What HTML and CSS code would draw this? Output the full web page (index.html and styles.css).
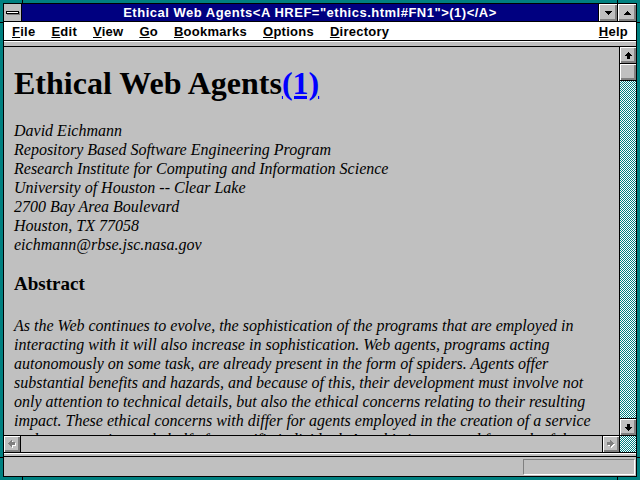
FILE: index.html
```html
<!DOCTYPE html>
<html lang="en">
<head>
    <meta charset="UTF-8">
    <title>Ethical Web Agents</title>
    <link rel="stylesheet" href="styles.css">
</head>
<body>

<div class="frame">
    <span class="tick tick-t1"></span>
    <span class="tick tick-t2"></span>
    <span class="tick tick-b1"></span>
    <span class="tick tick-b2"></span>
    <span class="tick tick-l1"></span>
    <span class="tick tick-l2"></span>
    <span class="tick tick-r1"></span>
    <span class="tick tick-r2"></span>

    <div class="window">
        <div class="titlebar">
            <div class="sysbox"><span class="sysbar"></span></div>
            <div class="title">Ethical Web Agents&lt;A HREF="ethics.html#FN1"&gt;(1)&lt;/A&gt;</div>
            <div class="tbtn">
                <svg width="9" height="6" viewBox="0 0 9 6" shape-rendering="crispEdges"><polygon points="1,1 8,1 4.5,5" fill="#000"/></svg>
            </div>
            <div class="tbtn">
                <svg width="9" height="6" viewBox="0 0 9 6" shape-rendering="crispEdges"><polygon points="1,5 8,5 4.5,1" fill="#000"/></svg>
            </div>
        </div>

        <div class="menubar">
            <span class="menu"><u>F</u>ile</span>
            <span class="menu"><u>E</u>dit</span>
            <span class="menu"><u>V</u>iew</span>
            <span class="menu"><u>G</u>o</span>
            <span class="menu"><u>B</u>ookmarks</span>
            <span class="menu"><u>O</u>ptions</span>
            <span class="menu"><u>D</u>irectory</span>
            <span class="menu help"><u>H</u>elp</span>
        </div>

        <div class="toolstrip"></div>

        <div class="view">
            <div class="page">
                <h1>Ethical Web Agents<a href="#FN1">(1)</a></h1>

                <div class="address">
                    David Eichmann<br>
                    Repository Based Software Engineering Program<br>
                    Research Institute for Computing and Information Science<br>
                    University of Houston -- Clear Lake<br>
                    2700 Bay Area Boulevard<br>
                    Houston, TX 77058<br>
                    eichmann@rbse.jsc.nasa.gov
                </div>

                <h3>Abstract</h3>

                <p class="abstract">
                    As the Web continues to evolve, the sophistication of the programs that are employed in<br>
                    interacting with it will also increase in sophistication. Web agents, programs acting<br>
                    autonomously on some task, are already present in the form of spiders. Agents offer<br>
                    substantial benefits and hazards, and because of this, their development must involve not<br>
                    only attention to technical details, but also the ethical concerns relating to their resulting<br>
                    impact. These ethical concerns with differ for agents employed in the creation of a service<br>
                    and agents acting on behalf of a specific individual. An ethic is proposed for each of these
                </p>
            </div>

            <div class="vbar">
                <div class="sbtn up">
                    <svg width="9" height="9" viewBox="0 0 9 9" shape-rendering="crispEdges"><polygon points="4.5,1 8,5 6,5 6,8 3,8 3,5 1,5" fill="#000"/></svg>
                </div>
                <div class="thumb"></div>
                <div class="track"></div>
                <div class="sbtn down">
                    <svg width="9" height="9" viewBox="0 0 9 9" shape-rendering="crispEdges"><polygon points="4.5,8 8,4 6,4 6,1 3,1 3,4 1,4" fill="#000"/></svg>
                </div>
            </div>

            <div class="hbar">
                <div class="sbtn left">
                    <svg width="10" height="10" viewBox="0 0 10 10" shape-rendering="crispEdges">
                        <polygon points="2,5.5 6,2 6,4 9,4 9,7 6,7 6,9" fill="#fff"/>
                        <polygon points="1,4.5 5,1 5,3 8,3 8,6 5,6 5,8" fill="#808080"/>
                    </svg>
                </div>
                <div class="htrack"></div>
                <div class="sbtn right">
                    <svg width="10" height="10" viewBox="0 0 10 10" shape-rendering="crispEdges">
                        <polygon points="9,5.5 5,2 5,4 2,4 2,7 5,7 5,9" fill="#fff"/>
                        <polygon points="8,4.5 4,1 4,3 1,3 1,6 4,6 4,8" fill="#808080"/>
                    </svg>
                </div>
            </div>

            <div class="corner"></div>
        </div>

        <div class="strip"></div>

        <div class="statusbar">
            <div class="statusbox"></div>
        </div>
    </div>
</div>

</body>
</html>
```

FILE: styles.css
```css
body {
    margin: 0;
    background: #008080;
}

.frame {
    position: relative;
    width: 640px;
    height: 480px;
    box-sizing: border-box;
    padding: 3px;
    background: #008080;
}

/* little black marks on the sizing border */
.tick {
    position: absolute;
    background: #000;
}
.tick-t1, .tick-t2, .tick-b1, .tick-b2 { width: 1px; height: 3px; }
.tick-l1, .tick-l2, .tick-r1, .tick-r2 { width: 3px; height: 1px; }
.tick-t1 { top: 0; left: 22px; }
.tick-t2 { top: 0; left: 617px; }
.tick-b1 { bottom: 0; left: 22px; }
.tick-b2 { bottom: 0; left: 617px; }
.tick-l1 { left: 0; top: 22px; }
.tick-l2 { left: 0; top: 457px; }
.tick-r1 { right: 0; top: 22px; }
.tick-r2 { right: 0; top: 457px; }

.window {
    height: 100%;
    box-sizing: border-box;
    border: 1px solid #000;
    display: flex;
    flex-direction: column;
    background: #c0c0c0;
}

/* title bar */
.titlebar {
    flex: none;
    height: 17px;
    display: flex;
    background: #000080;
    border-bottom: 1px solid #000;
}
.sysbox {
    width: 17px;
    background: #c0c0c0;
    border-right: 1px solid #000;
    display: flex;
    align-items: center;
    justify-content: center;
}
.sysbar {
    width: 11px;
    height: 1px;
    background: #fff;
    border: 1px solid #000;
    box-shadow: 1px 1px #808080;
}
.title {
    flex: 1;
    color: #fff;
    font: bold 13px "Liberation Sans", Arial, sans-serif;
    letter-spacing: 0.5px;
    line-height: 17px;
    text-align: center;
    white-space: nowrap;
    overflow: hidden;
}
.tbtn {
    width: 18px;
    border-left: 1px solid #000;
    background: #c0c0c0;
    box-shadow: inset 1px 1px #fff, inset -1px -1px #808080, inset -2px -2px #808080;
    display: flex;
    align-items: center;
    justify-content: center;
}

/* menu */
.menubar {
    flex: none;
    height: 18px;
    display: flex;
    align-items: center;
    background: #fff;
    border-bottom: 1px solid #000;
    font: bold 13px "Liberation Sans", Arial, sans-serif;
    letter-spacing: 0.25px;
    color: #000;
}
.menu {
    padding: 0 8px;
    white-space: nowrap;
}
.menu.help {
    margin-left: auto;
}

.toolstrip {
    flex: none;
    height: 4px;
    border-top: 1px solid #fff;
    border-bottom: 1px solid #000;
    background: #c0c0c0;
}

/* document view */
.view {
    flex: 1;
    min-height: 0;
    display: grid;
    grid-template-columns: 1fr 17px;
    grid-template-rows: 1fr 17px;
    border-bottom: 1px solid #000;
}
.page {
    overflow: hidden;
    padding: 0 10px;
    background: #c0c0c0;
    color: #000;
    font-family: "Liberation Serif", "Times New Roman", serif;
}
.page h1 {
    margin: 18px 0 0;
    font-size: 32px;
    line-height: 36px;
    font-weight: bold;
    white-space: nowrap;
}
.page h1 a {
    color: #0000ff;
    text-decoration: underline;
}
.address {
    margin-top: 20px;
    font-style: italic;
    font-size: 16px;
    line-height: 19px;
}
.page h3 {
    margin: 19px 0 0;
    font-size: 19px;
    line-height: 22px;
    font-weight: bold;
}
.abstract {
    margin: 21px 0 0;
    font-style: italic;
    font-size: 16px;
    line-height: 19px;
    white-space: nowrap;
}

/* scroll bars */
.vbar {
    border-left: 1px solid #000;
    display: flex;
    flex-direction: column;
    background: repeating-conic-gradient(#008080 0 25%, #fff 0 50%);
    background-size: 2px 2px;
}
.sbtn {
    flex: none;
    height: 16px;
    background: #c0c0c0;
    box-shadow: inset 1px 1px #fff, inset -1px -1px #808080, inset -2px -2px #808080;
    display: flex;
    align-items: center;
    justify-content: center;
}
.sbtn.up {
    border-bottom: 1px solid #000;
}
.sbtn.down {
    border-top: 1px solid #000;
}
.thumb {
    height: 16px;
    background: #c0c0c0;
    border-bottom: 1px solid #000;
    box-shadow: inset 1px 1px #fff, inset -1px -1px #808080, inset -2px -2px #808080;
}
.track {
    flex: 1;
}
.hbar {
    border-top: 1px solid #000;
    display: flex;
    background: #c0c0c0;
}
.sbtn.left {
    width: 16px;
    border-right: 1px solid #000;
}
.sbtn.right {
    width: 16px;
    border-left: 1px solid #000;
}
.htrack {
    flex: 1;
}
.corner {
    border-top: 1px solid #000;
    border-left: 1px solid #000;
    background: repeating-conic-gradient(#008080 0 25%, #fff 0 50%);
    background-size: 2px 2px;
}

/* status */
.strip {
    flex: none;
    height: 2px;
    border-top: 1px solid #fff;
    border-bottom: 1px solid #000;
    background: #c0c0c0;
}
.statusbar {
    flex: none;
    height: 19px;
    box-sizing: border-box;
    padding: 2px 1px 0 0;
    display: flex;
    justify-content: flex-end;
    align-items: flex-start;
    background: #c0c0c0;
}
.statusbox {
    width: 110px;
    height: 14px;
    border: 1px solid;
    border-color: #808080 #fff #fff #808080;
}
```
